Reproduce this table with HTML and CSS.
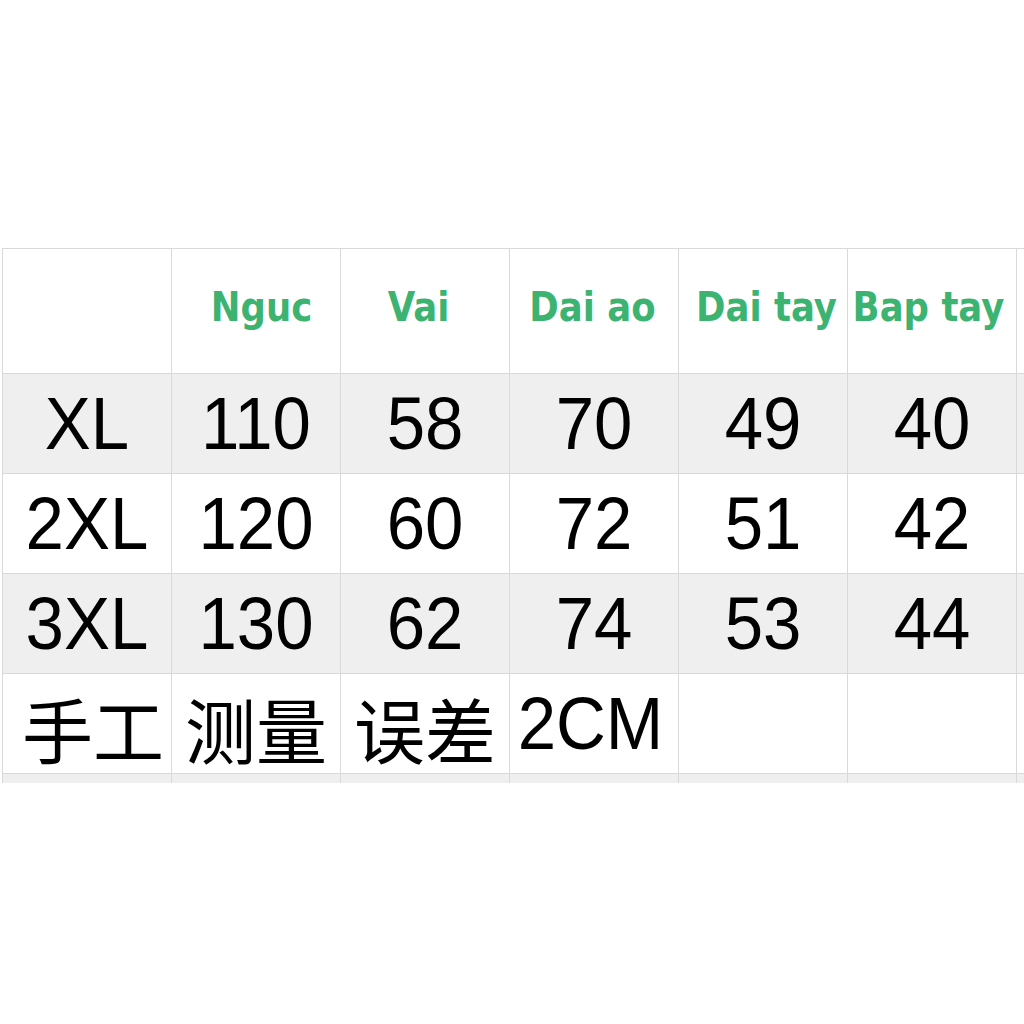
FILE: index.html
```html
<!DOCTYPE html>
<html>
<head>
<meta charset="utf-8">
<link rel="stylesheet" href="styles.css">
</head>
<body>
<div class="page">
  <div class="sheet">
    <div class="grid">
      <div class="row head">
        <div class="cell"></div>
        <div class="cell"><span class="h sh-r5">Nguc</span></div>
        <div class="cell"><span class="h sh-l6">Vai</span></div>
        <div class="cell"><span class="h sh-l1">Dai ao</span></div>
        <div class="cell"><span class="h sh-r3">Dai tay</span></div>
        <div class="cell"><span class="h sh-l3">Bap tay</span></div>
        <div class="cell"></div>
      </div>
      <div class="row alt">
        <div class="cell"><span class="n">XL</span></div>
        <div class="cell"><span class="n">110</span></div>
        <div class="cell"><span class="n">58</span></div>
        <div class="cell"><span class="n">70</span></div>
        <div class="cell"><span class="n">49</span></div>
        <div class="cell"><span class="n">40</span></div>
        <div class="cell"></div>
      </div>
      <div class="row">
        <div class="cell"><span class="n">2XL</span></div>
        <div class="cell"><span class="n">120</span></div>
        <div class="cell"><span class="n">60</span></div>
        <div class="cell"><span class="n">72</span></div>
        <div class="cell"><span class="n">51</span></div>
        <div class="cell"><span class="n">42</span></div>
        <div class="cell"></div>
      </div>
      <div class="row alt">
        <div class="cell"><span class="n">3XL</span></div>
        <div class="cell"><span class="n">130</span></div>
        <div class="cell"><span class="n">62</span></div>
        <div class="cell"><span class="n">74</span></div>
        <div class="cell"><span class="n">53</span></div>
        <div class="cell"><span class="n">44</span></div>
        <div class="cell"></div>
      </div>
      <div class="row">
        <div class="cell"><span class="c sh-r6">手工</span></div>
        <div class="cell"><span class="c">测量</span></div>
        <div class="cell"><span class="c">误差</span></div>
        <div class="cell"><span class="n sh-l3">2CM</span></div>
        <div class="cell"></div>
        <div class="cell"></div>
        <div class="cell"></div>
      </div>
      <div class="row alt">
        <div class="cell"></div>
        <div class="cell"></div>
        <div class="cell"></div>
        <div class="cell"></div>
        <div class="cell"></div>
        <div class="cell"></div>
        <div class="cell"></div>
      </div>
    </div>
  </div>
</div>
</body>
</html>
```
FILE: styles.css
```css
html, body {
  margin: 0;
  padding: 0;
  background: #ffffff;
}
.page {
  width: 1024px;
  height: 1024px;
  padding-top: 248px;
  padding-left: 2px;
  box-sizing: border-box;
}
.sheet {
  width: 1022px;
  height: 535px;
  overflow: hidden;
}
.grid {
  display: grid;
  width: max-content;
  grid-template-columns: repeat(7, 168px);
  grid-template-rows: 124px;
  grid-auto-rows: 99px;
  gap: 1px;
  padding: 1px 0 0 1px;
  background: #d9d9d9;
}
.row {
  display: contents;
}
.cell {
  background: #ffffff;
  display: flex;
  align-items: center;
  justify-content: center;
  overflow: visible;
  white-space: nowrap;
}
.row.alt .cell {
  background: #efefef;
}
.row.head .cell {
  padding-bottom: 10px;
  box-sizing: border-box;
}
.h {
  display: inline-block;
  font-family: "DejaVu Sans", Verdana, sans-serif;
  font-weight: bold;
  font-size: 35.5px;
  color: #3cb371;
  transform: scaleY(1.14);
}
.n {
  display: inline-block;
  font-family: "Liberation Sans", Arial, sans-serif;
  font-size: 69px;
  color: #000000;
  transform: scaleY(1.08);
}
.c {
  display: inline-block;
  font-family: "Noto Sans CJK SC", "Noto Sans CJK JP", sans-serif;
  font-size: 71px;
  color: #000000;
  transform: translateY(3px);
}
.sh-r5 { margin-left: 11px; }
.sh-l6 { margin-right: 13px; }
.sh-l1 { margin-right: 3px; }
.sh-r3 { margin-left: 7px; }
.sh-l3 { margin-right: 7px; }
.sh-r6 { margin-left: 12px; }
```
